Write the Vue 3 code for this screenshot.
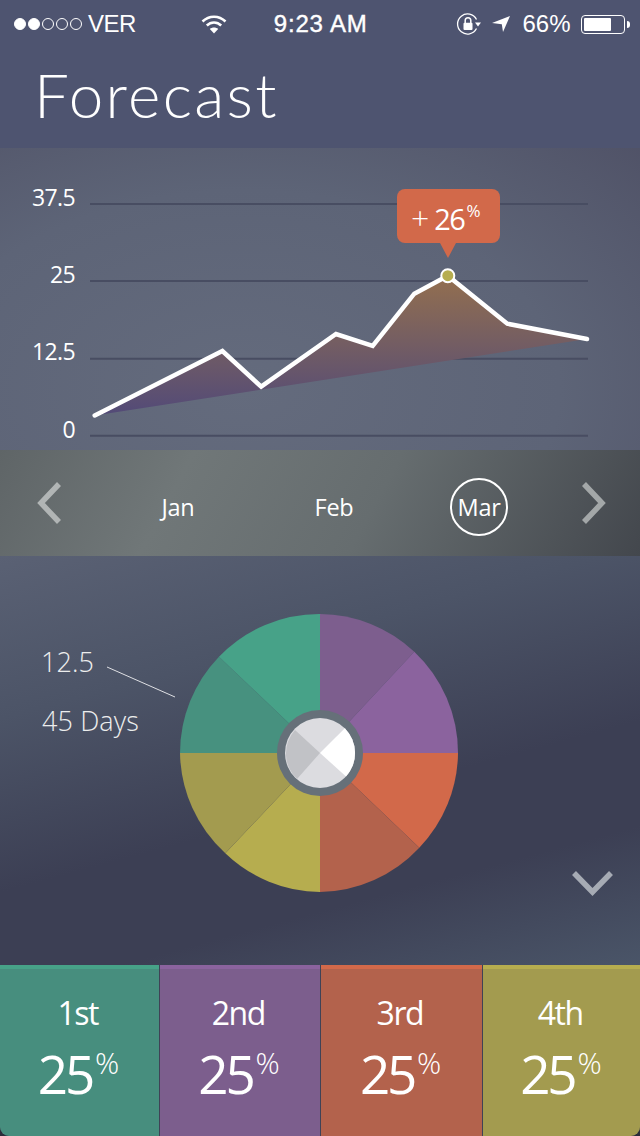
<script setup>
const linePts = '94.7,415.5 222.4,351 261.2,386.7 336,334 372.7,346 414.3,293.7 447.8,275.7 507.3,323.7 587,339'
const gridYs = [204, 281, 358.7, 435.7]
const axis = [
  { t: '37.5', y: 206 },
  { t: '25', y: 283 },
  { t: '12.5', y: 360 },
  { t: '0', y: 438 }
]
const slices = [
  { d: 'M320 753V614A139 139 0 0 1 414.3 651.7Z', c: '#7d5e8e' },
  { d: 'M320 753L414.3 651.7A139 139 0 0 1 458 753Z', c: '#8b639e' },
  { d: 'M320 753H458A139 139 0 0 1 419.3 847.7Z', c: '#d2694a' },
  { d: 'M320 753L419.3 847.7A139 139 0 0 1 320 892Z', c: '#b3624c' },
  { d: 'M320 753V892A139 139 0 0 1 225.3 853.3Z', c: '#b6ad4f' },
  { d: 'M320 753L225.3 853.3A139 139 0 0 1 180 753Z', c: '#a39b4f' },
  { d: 'M320 753H180A139 139 0 0 1 219 656.7Z', c: '#47917f' },
  { d: 'M320 753L219 656.7A139 139 0 0 1 320 614Z', c: '#47a288' }
]
const tiles = [
  { label: '1st', cls: 'green' },
  { label: '2nd', cls: 'purple' },
  { label: '3rd', cls: 'orange' },
  { label: '4th', cls: 'olive' }
]
</script>

<template>
  <div class="page">
    <header class="top">
      <div class="status">
        <div class="signal">
          <i class="dot on"></i><i class="dot on"></i><i class="dot"></i><i class="dot"></i><i class="dot"></i>
        </div>
        <span class="carrier">VER</span>
        <svg class="wifi" width="26" height="20" viewBox="0 0 26 20">
          <path d="M1.5 7.5C8 1 18 1 24.5 7.5" fill="none" stroke="#fff" stroke-width="2.5"/>
          <path d="M5.8 11.5C10 7.5 16 7.5 20.2 11.5" fill="none" stroke="#fff" stroke-width="2.5"/>
          <path d="M8.8 15C11 13 15 13 17.2 15L13 19.5Z" fill="#fff"/>
        </svg>
        <span class="time">9:23 AM</span>
        <svg class="lock" width="26" height="24" viewBox="0 0 26 24">
          <path d="M20.5 7.5A10 10 0 1 0 20.5 16.5" fill="none" stroke="#fff" stroke-width="1.3"/>
          <path d="M19 10.5H25L22 14.5Z" fill="#fff"/>
          <path d="M9.2 11V8.5A2.8 2.8 0 0 1 14.8 8.5V11" fill="none" stroke="#fff" stroke-width="1.5"/>
          <rect x="7.5" y="10.8" width="9" height="7.2" rx="1" fill="#fff"/>
        </svg>
        <svg class="arrow" width="20" height="18" viewBox="0 0 20 18">
          <path d="M1 8L19 1L12 17L10.8 9.2Z" fill="#fff"/>
        </svg>
        <span class="pct">66%</span>
        <div class="battery"><div class="charge"></div></div>
        <i class="nub"></i>
      </div>
      <h1 class="title">Forecast</h1>
    </header>

    <section class="chart">
      <svg class="chart-svg" width="640" height="302" viewBox="0 148 640 302">
        <defs>
          <linearGradient id="area" x1="0" y1="276" x2="0" y2="416" gradientUnits="userSpaceOnUse">
            <stop offset="0" stop-color="#936f4f"/>
            <stop offset="1" stop-color="#524a78"/>
          </linearGradient>
        </defs>
        <line v-for="y in gridYs" :key="y" x1="90" x2="588" :y1="y" :y2="y" class="grid"/>
        <text v-for="a in axis" :key="a.t" x="75" :y="a.y" class="axis">{{ a.t }}</text>
        <polygon :points="linePts" fill="url(#area)"/>
        <polyline :points="linePts" class="line"/>
        <circle cx="447.8" cy="275.7" r="6.5" fill="#b6ad4f" stroke="#fff" stroke-width="2"/>
      </svg>
      <div class="tip">
        <span class="plus">+</span><span class="tip-num">26</span><sup class="tip-sup">%</sup>
      </div>
    </section>

    <nav class="months">
      <svg width="30" height="44" viewBox="0 0 30 44" class="chev">
        <path d="M24 3L6 22L24 41" fill="none" stroke="#b1b5b5" stroke-width="5.5"/>
      </svg>
      <span class="month">Jan</span>
      <span class="month">Feb</span>
      <span class="month current">Mar</span>
      <svg width="30" height="44" viewBox="0 0 30 44" class="chev">
        <path d="M6 3L24 22L6 41" fill="none" stroke="#a3a7a8" stroke-width="5.5"/>
      </svg>
    </nav>

    <section class="wheel">
      <svg width="640" height="409" viewBox="0 556 640 409">
        <path v-for="s in slices" :key="s.d" :d="s.d" :fill="s.c"/>
        <circle cx="320" cy="753" r="43" fill="#667079"/>
        <circle cx="320" cy="753" r="35" fill="#dcdce0"/>
        <path d="M320 753L344.8 728.3A35 35 0 0 1 346 776.5Z" fill="#fff"/>
        <path d="M320 753L295 730A35 35 0 0 0 297 779Z" fill="#c1c2c6"/>
        <text x="41" y="672" class="wheel-text">12.5</text>
        <text x="42" y="731" class="wheel-text">45 Days</text>
        <line x1="107" y1="667" x2="175" y2="697" stroke="#dfe0e4" stroke-width="1"/>
        <path d="M574 873L592.5 892L611 873" fill="none" stroke="#a6abb4" stroke-width="5.5"/>
      </svg>
    </section>

    <footer class="tiles">
      <div v-for="t in tiles" :key="t.label" class="tile" :class="t.cls">
        <div class="tile-label">{{ t.label }}</div>
        <div class="tile-value">25<sup class="tile-sup">%</sup></div>
      </div>
    </footer>
  </div>
</template>

<style scoped>
.page {
  width: 640px;
  height: 1136px;
  overflow: hidden;
  display: flex;
  flex-direction: column;
  border-radius: 0 0 9px 9px;
  background: #3f4256;
  color: #fff;
  font-family: "Open Sans", sans-serif;
}
.top {
  height: 148px;
  background: #4e5470;
  flex: none;
}
.status {
  display: flex;
  align-items: center;
  height: 48px;
  font-family: "Liberation Sans", sans-serif;
  font-size: 24px;
}
.signal {
  display: flex;
  gap: 2px;
  margin-left: 14px;
}
.dot {
  width: 12px;
  height: 12px;
  border: 1px solid #fff;
  border-radius: 50%;
  box-sizing: border-box;
}
.dot.on { background: #fff; }
.carrier { margin-left: 6px; letter-spacing: -0.5px; }
.wifi { margin-left: 65px; }
.time {
  margin-left: 47px;
  letter-spacing: 0.8px;
  -webkit-text-stroke: 0.4px #fff;
}
.lock { margin-left: 88px; }
.arrow { margin-left: 9px; }
.pct { margin-left: 12px; }
.battery {
  width: 44px;
  height: 19px;
  margin-left: 10px;
  border: 1px solid #fff;
  border-radius: 4px;
  box-sizing: border-box;
  padding: 2px;
}
.charge {
  width: 27px;
  height: 100%;
  background: #fff;
  border-radius: 1px;
}
.nub {
  width: 3px;
  height: 7px;
  margin-left: 2px;
  background: #fff;
  border-radius: 0 3px 3px 0;
}
.title {
  margin: 9px 0 0 34px;
  font-family: Lato, sans-serif;
  font-weight: 300;
  font-size: 62px;
  line-height: 74px;
  letter-spacing: 2.3px;
}
.chart {
  position: relative;
  height: 302px;
  flex: none;
  background: radial-gradient(ellipse 90% 120% at 38% 80%, #646b7d 0, #5d6477 55%, #4f5166 100%);
}
.chart-svg { display: block; }
.grid { stroke: #484d62; stroke-width: 2; }
.axis {
  fill: #fff;
  font-size: 23px;
  text-anchor: end;
  letter-spacing: -0.6px;
}
.line {
  fill: none;
  stroke: #fff;
  stroke-width: 4.5;
  stroke-linecap: round;
}
.tip {
  position: absolute;
  left: 397px;
  top: 41px;
  width: 103px;
  height: 54px;
  box-sizing: border-box;
  padding-left: 14px;
  background: #d2694a;
  border-radius: 8px;
  display: flex;
  align-items: baseline;
  line-height: 58px;
}
.tip::after {
  content: "";
  position: absolute;
  left: 43px;
  top: 54px;
  border-left: 8px solid transparent;
  border-right: 8px solid transparent;
  border-top: 15px solid #d2694a;
}
.plus { font-size: 32px; margin-right: 5px; font-weight: 300; }
.tip-num { font-size: 29px; letter-spacing: -1.5px; }
.tip-sup { font-size: 17px; line-height: 0; position: relative; top: -13px; margin-left: 2px; letter-spacing: -1px; }
.months {
  height: 106px;
  flex: none;
  box-sizing: border-box;
  padding-top: 7px;
  display: grid;
  grid-template-columns: 100px 156px 156px 134px 94px;
  align-items: center;
  justify-items: center;
  background: linear-gradient(118deg, #5f6567 0, #707778 28%, #666d6f 58%, #43474d 100%);
}
.month { font-size: 23.5px; letter-spacing: -0.3px; }
.current {
  width: 58px;
  height: 58px;
  box-sizing: border-box;
  border: 2px solid #fff;
  border-radius: 50%;
  display: flex;
  align-items: center;
  justify-content: center;
}
.chev { margin-top: -8px; }
.wheel {
  height: 409px;
  flex: none;
  background:
    linear-gradient(165deg, #5a6174 0, #4c5467 28%, #3c3f54 58%, #3c3f54 76%, #4a5568 100%);
}
.wheel svg { display: block; }
.wheel-text {
  fill: #eceded;
  font-size: 27px;
  font-weight: 300;
  letter-spacing: 0.1px;
}
.tiles {
  flex: 1;
  display: grid;
  grid-template-columns: 158.5px 160px 160.5px 157.5px;
  column-gap: 1.3px;
}
.tile {
  text-align: center;
  box-sizing: border-box;
  border-top: 4px solid;
  padding: 22px 3px 0 0;
}
.green { background: #478e7e; border-color: #47a288; }
.purple { background: #7c5e8d; border-color: #8b639e; }
.orange { background: #b3624c; border-color: #d2694a; }
.olive { background: #a39b4f; border-color: #b6ad4f; }
.tile-label {
  font-size: 32px;
  line-height: 44px;
  letter-spacing: -1.5px;
}
.tile-value {
  font-size: 53px;
  line-height: 72px;
  letter-spacing: -3.2px;
  margin-top: 3px;
}
.tile-sup {
  font-size: 30px;
  font-weight: 300;
  line-height: 0;
  letter-spacing: -1.5px;
  vertical-align: 20px;
  margin-left: 3px;
}
</style>

<style>
html, body { background: #2b2d3a; }
</style>
